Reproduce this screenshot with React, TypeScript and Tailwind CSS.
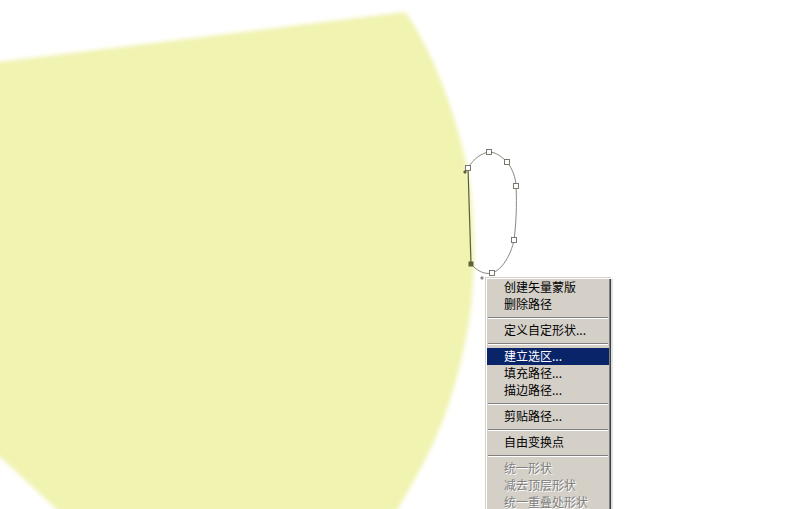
import React from "react";

type Item = { label: string; kind?: "sep" | "active" | "disabled" };

const items: Item[] = [
  { label: "创建矢量蒙版" },
  { label: "删除路径" },
  { label: "", kind: "sep" },
  { label: "定义自定形状..." },
  { label: "", kind: "sep" },
  { label: "建立选区...", kind: "active" },
  { label: "填充路径..." },
  { label: "描边路径..." },
  { label: "", kind: "sep" },
  { label: "剪贴路径..." },
  { label: "", kind: "sep" },
  { label: "自由变换点" },
  { label: "", kind: "sep" },
  { label: "统一形状", kind: "disabled" },
  { label: "减去顶层形状", kind: "disabled" },
  { label: "统一重叠处形状", kind: "disabled" },
];

function Canvas() {
  const anchors: [number, number][] = [
    [468, 168],
    [489, 152],
    [507, 162],
    [516, 186],
    [514, 240],
    [492, 273],
  ];
  return (
    <svg className="absolute inset-0" width="801" height="509" viewBox="0 0 801 509">
      <defs>
        <filter id="feather" x="-10%" y="-10%" width="120%" height="120%">
          <feGaussianBlur stdDeviation="2.2" />
        </filter>
      </defs>
      {/* feathered yellow selection fill */}
      <path
        d="M-10,63 L405,12 C430,45 455,110 467,167 C476,215 476,290 467,333 C458,380 445,420 430,450 C418,475 405,495 392,520 L68,520 C45,498 20,475 -10,448 Z"
        fill="#f1f3b1"
        filter="url(#feather)"
      />
      {/* work path */}
      <path
        d="M468,168 C474,158 482,153 489,152 C496,152 502,157 507,162 C512,168 516,178 516,186 C517,205 516,225 514,240 C511,255 502,270 492,273 C484,275 476,270 471,264"
        fill="none"
        stroke="#7a7a70"
        strokeWidth="0.9"
      />
      <path d="M471,264 L468,168" fill="none" stroke="#5f6038" strokeWidth="1.2" />
      {anchors.map(([x, y], i) => (
        <rect key={i} x={x - 2.5} y={y - 2.5} width="5" height="5" fill="#fff" stroke="#6a6a60" strokeWidth="0.9" />
      ))}
      <rect x={468.5} y={261.5} width="5" height="5" fill="#5f6038" />
      <path d="M465,170 L467,172 L465,174 L463,172 Z" fill="#5f6038" />
      <path d="M482,276 L484,278 L482,280 L480,278 Z" fill="#888" />
    </svg>
  );
}

export default function App() {
  return (
    <div className="relative w-[801px] h-[509px] bg-white overflow-hidden">
      <Canvas />
      <div className="absolute left-[485px] top-[277px] w-[126px] bg-[#d4d0c8] shadow-[inset_1px_1px_0_#d4d0c8,inset_2px_2px_0_#ffffff,inset_-1px_-1px_0_#404040,inset_-2px_-2px_0_#808080,2px_2px_0_#e2e2e2] p-[2px] font-['SimSun','Noto_Sans_CJK_SC',sans-serif] text-[12px] leading-[15px]">
        {items.map((it, i) => {
          if (it.kind === "sep") {
            return (
              <div key={i} className="h-[9px] flex flex-col justify-center px-[1px]">
                <div className="h-px bg-[#808080]" />
                <div className="h-px bg-white" />
              </div>
            );
          }
          const cls =
            it.kind === "active"
              ? "bg-[#0a246a] text-white"
              : it.kind === "disabled"
                ? "text-[#808080] [text-shadow:1px_1px_0_#ffffff]"
                : "text-black";
          return (
            <div key={i} className={`h-[17px] pl-[17px] whitespace-nowrap ${cls}`}>
              {it.label}
            </div>
          );
        })}
      </div>
    </div>
  );
}
